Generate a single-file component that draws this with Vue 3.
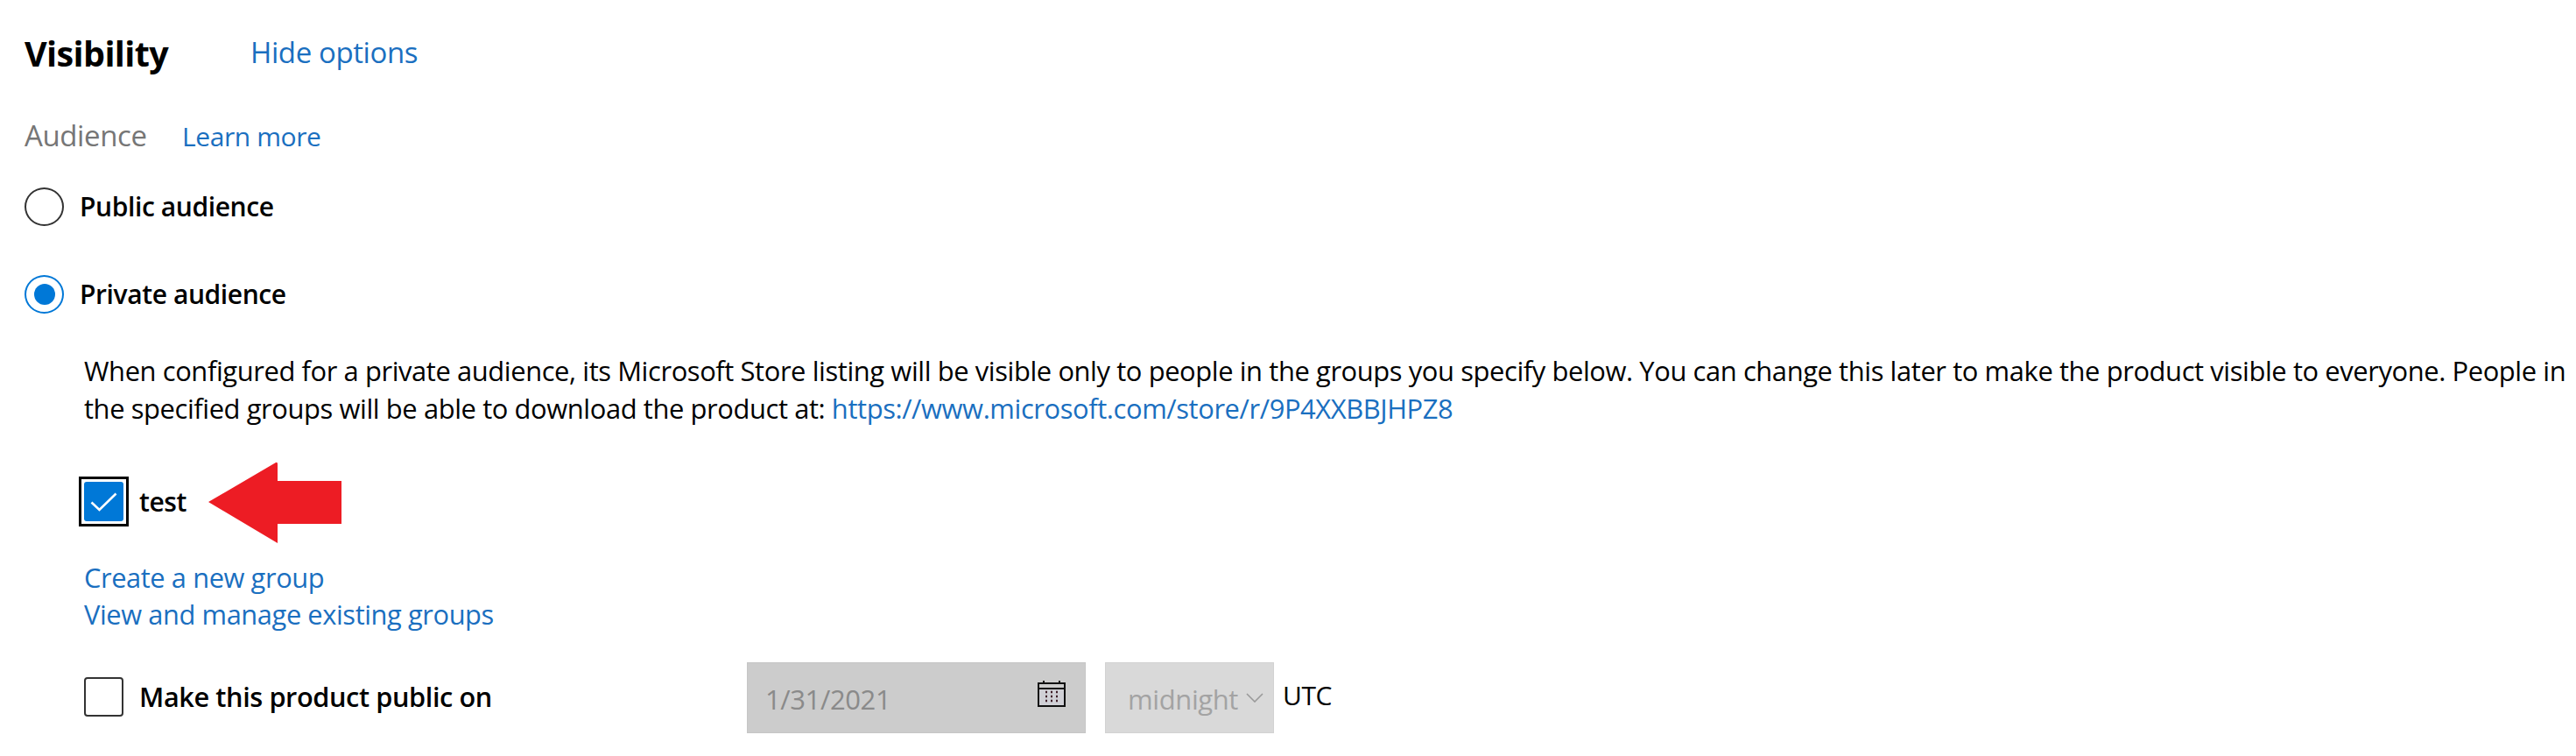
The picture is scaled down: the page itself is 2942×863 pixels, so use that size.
<template>
  <main class="page">
    <header class="title-row">
      <h2 class="title">Visibility</h2>
      <a class="link hide">Hide options</a>
    </header>
    <div class="aud-row">
      <span class="aud">Audience</span>
      <a class="link learn">Learn more</a>
    </div>
    <label class="radio-row first">
      <span class="radio"></span>
      <span class="opt">Public audience</span>
    </label>
    <label class="radio-row second">
      <span class="radio on"><i></i></span>
      <span class="opt">Private audience</span>
    </label>
    <div class="inner">
      <p class="para">
        <span class="line">When configured for a private audience, its Microsoft Store listing will be visible only to people in the groups you specify below. You can change this later to make the product visible to everyone. People in</span>
        <span class="line">the specified groups will be able to download the product at: <a class="url">https://www.microsoft.com/store/r/9P4XXBBJHPZ8</a></span>
      </p>
      <div class="group-row">
        <span class="focus">
          <span class="check">
            <svg width="45" height="45" viewBox="0 0 45 45"><path d="M8.5 23.5 L17.5 32 L36.5 13.5" fill="none" stroke="#fff" stroke-width="2.6"/></svg>
          </span>
        </span>
        <span class="opt test">test</span>
        <svg class="arrow" width="152" height="95" viewBox="0 0 152 95"><path d="M0 46 L77 1 Q79 0 79 3 L79 22 L152 22 L152 71 L79 71 L79 93 Z" fill="#ed1c24"/></svg>
      </div>
      <div class="links">
        <a class="link">Create a new group</a>
        <a class="link">View and manage existing groups</a>
      </div>
      <div class="public-row">
        <span class="box"></span>
        <span class="opt make">Make this product public on</span>
        <div class="date">
          <span class="date-text">1/31/2021</span>
          <svg width="34" height="32" viewBox="0 0 34 32">
            <path d="M8 1v6M26 1v6" stroke="#111" stroke-width="2"/>
            <rect x="2" y="4" width="30" height="26" fill="#d0d0d6" stroke="#111" stroke-width="2"/>
            <rect x="2" y="4" width="30" height="6" fill="#ccc" stroke="#111" stroke-width="2"/>
            <path d="M10 14h2M16 14h2M22 14h2M10 19h2M16 19h2M22 19h2M10 24h2M16 24h2M22 24h2" stroke="#40202a" stroke-width="2.4"/>
          </svg>
        </div>
        <div class="select">
          <span class="date-text">midnight</span>
          <svg width="20" height="11" viewBox="0 0 20 11"><path d="M1 1 L10 10 L19 1" fill="none" stroke="#9a9a9a" stroke-width="1.6"/></svg>
        </div>
        <span class="utc">UTC</span>
      </div>
    </div>
  </main>
</template>

<script setup>
</script>

<style>
html, body { background: #fff; margin: 0; }
</style>

<style scoped>
.page {
  width: 2942px;
  height: 863px;
  box-sizing: border-box;
  padding: 0 0 0 28px;
  overflow: hidden;
  font-family: "Open Sans", "Noto Sans", sans-serif;
  font-size: 30px;
  color: #000;
  letter-spacing: -0.4px;
}
.link { color: #1a6fc0; display: block; }
.url { color: #1a6fc0; }
.title-row { display: flex; align-items: flex-start; height: 96px; padding-top: 34px; box-sizing: border-box; }
.title { margin: 1px 0 0; font-size: 39.5px; font-weight: 700; width: 258px; letter-spacing: -0.6px; line-height: 52px; }
.hide { font-size: 33px; line-height: 50px; margin-top: 1px; }
.aud-row { display: flex; align-items: baseline; height: 88px; padding-top: 38px; box-sizing: border-box; }
.aud { color: #767676; width: 180px; font-size: 33px; line-height: 42px; }
.radio-row { display: flex; align-items: center; height: 44px; }
.first { margin-top: 30px; }
.second { margin-top: 56px; }
.radio {
  width: 45px; height: 44px; border: 2px solid #333; border-radius: 50%;
  box-sizing: border-box; display: flex; align-items: center; justify-content: center;
}
.radio.on { border-color: #0078d7; }
.radio i { width: 24px; height: 24px; background: #0078d7; border-radius: 50%; }
.opt { font-weight: 600; margin-left: 18px; line-height: 44px; }
.inner { padding-left: 68px; }
.para { margin: 44px 0 0; font-size: 30.9px; }
.line { display: block; white-space: nowrap; line-height: 43px; }
.group-row { display: flex; align-items: center; height: 57px; margin-top: 56px; margin-left: -6px; position: relative; }
.focus { width: 57px; height: 57px; border: 3px solid #000; box-sizing: border-box; display: flex; align-items: center; justify-content: center; }
.check { width: 45px; height: 45px; background: #0078d7; border-radius: 3px; display: block; }
.check svg { display: block; }
.test { margin-left: 12px; }
.arrow { position: absolute; left: 148px; top: -17px; }
.links { margin-top: 37px; font-size: 30.8px; }
.links .link { line-height: 42px; }
.public-row { display: flex; align-items: center; height: 81px; margin-top: 34px; }
.box { width: 45px; height: 45px; border: 2px solid #333; border-radius: 4px; box-sizing: border-box; margin-top: -3px; }
.make { width: 694px; margin-left: 18px; margin-top: -3px; font-size: 30.7px; }
.date {
  width: 387px; height: 81px; background: #ccc; border: 1px solid #c6c6c6; box-sizing: border-box;
  display: flex; align-items: center; justify-content: space-between; padding: 0 21px 0 20px; color: #8a8a8a; font-size: 31px;
}
.date svg { margin-top: -10px; }
.date-text { margin-top: 2px; }
.select {
  width: 193px; height: 81px; margin-left: 22px; background: #d9d9d9; border: 1px solid #d2d2d2; box-sizing: border-box;
  display: flex; align-items: center; padding-left: 25px; gap: 9px; color: #a3a3a3; font-size: 31px;
}
.utc { margin-left: 10px; margin-top: -6px; }
</style>
